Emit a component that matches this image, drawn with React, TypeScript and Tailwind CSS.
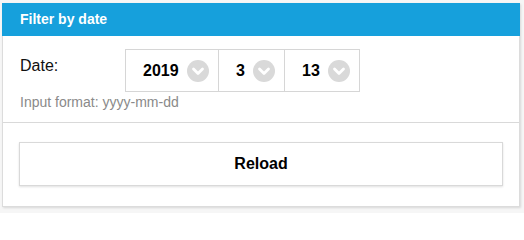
import React from 'react';

// Grey round chevron used on each date select
const ChevronCircle: React.FC = () => (
  <svg width="22" height="22" viewBox="0 0 22 22" className="shrink-0">
    <circle cx="11" cy="11" r="11" fill="#d9d9d9" />
    <path d="M6.5 9 L11 13.5 L15.5 9" fill="none" stroke="#ffffff" strokeWidth="2.8" strokeLinecap="round" strokeLinejoin="round" />
  </svg>
);

const DatePart: React.FC<{ value: string; width: string; last?: boolean }> = ({ value, width, last }) => (
  <div className={`flex items-center justify-between pl-[17px] pr-[9px] h-full ${width} ${last ? '' : 'border-r border-[#d6d6d6]'}`}>
    <span className="text-[16px] font-bold text-black leading-none">{value}</span>
    <ChevronCircle />
  </div>
);

export default function App() {
  return (
    <div className="min-h-[213px] bg-[#f6f6f6] pl-[2px] pt-[3px] pb-[6px]" style={{ fontFamily: '"Liberation Sans", Arial, sans-serif' }}>
      <div className="w-[518px] bg-white border border-t-0 border-[#dcdcdc] shadow-[1px_1px_2px_rgba(0,0,0,0.12)]">
        {/* Header */}
        <div className="h-[33px] bg-[#16a0dc] flex items-center px-[18px] -mx-px">
          <h2 className="text-[14px] font-bold text-white">Filter by date</h2>
        </div>

        {/* Date row */}
        <div className="px-[17px] pt-[13px] pb-[12px] border-b border-[#d9d9d9]">
          <div className="flex items-start">
            <label className="w-[105px] pt-[8px] text-[16px] text-[#111] leading-[18px]">Date:</label>
            <div className="flex h-[43px] border border-[#d6d6d6]">
              <DatePart value="2019" width="w-[93px]" />
              <DatePart value="3" width="w-[66px]" />
              <DatePart value="13" width="w-[74px]" last />
            </div>
          </div>
          <p className="mt-[2px] text-[14px] leading-[16px] text-[#8a8a8a]">Input format: yyyy-mm-dd</p>
        </div>

        {/* Actions */}
        <div className="px-[16px] pt-[19px] pb-[20px]">
          <button className="w-full h-[44px] bg-white border border-[#d9d9d9] shadow-[0_1px_2px_rgba(0,0,0,0.12)] text-[16px] font-bold text-black">
            Reload
          </button>
        </div>
      </div>
    </div>
  );
}
